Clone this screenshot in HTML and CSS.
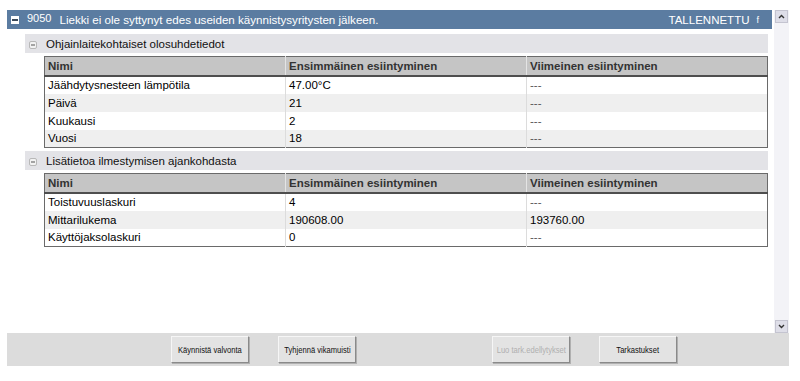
FILE: index.html
```html
<!DOCTYPE html>
<html lang="fi">
<head>
<meta charset="utf-8">
<title>9050</title>
<link rel="stylesheet" href="styles.css">
</head>
<body>
<div class="app">
  <div class="main">
    <div class="content">
      <div class="titlebar">
        <span class="tb-icon"><svg width="8" height="8" viewBox="0 0 8 8"><rect x="0" y="0" width="8" height="8" fill="#fff"/><rect x="1" y="3" width="6" height="2" fill="#3c4a5a"/></svg></span>
        <span class="code">9050</span>
        <span class="title">Liekki ei ole syttynyt edes useiden käynnistysyritysten jälkeen.</span>
        <span class="status">TALLENNETTU</span>
        <span class="flag">f</span>
      </div>

      <div class="section">
        <div class="sec-head">
          <svg class="sec-icon" width="8" height="8" viewBox="0 0 8 8"><rect x="0.5" y="0.5" width="7" height="7" rx="1.5" fill="#f2f2f2" stroke="#b8b8b8"/><rect x="2" y="3.5" width="4" height="1" fill="#555"/></svg>
          <span>Ohjainlaitekohtaiset olosuhdetiedot</span>
        </div>
        <table class="grid">
          <thead>
            <tr><th>Nimi</th><th>Ensimmäinen esiintyminen</th><th>Viimeinen esiintyminen</th></tr>
          </thead>
          <tbody>
            <tr><td>Jäähdytysnesteen lämpötila</td><td>47.00°C</td><td class="dash">---</td></tr>
            <tr><td>Päivä</td><td>21</td><td class="dash">---</td></tr>
            <tr><td>Kuukausi</td><td>2</td><td class="dash">---</td></tr>
            <tr><td>Vuosi</td><td>18</td><td class="dash">---</td></tr>
          </tbody>
        </table>
      </div>

      <div class="section">
        <div class="sec-head">
          <svg class="sec-icon" width="8" height="8" viewBox="0 0 8 8"><rect x="0.5" y="0.5" width="7" height="7" rx="1.5" fill="#f2f2f2" stroke="#b8b8b8"/><rect x="2" y="3.5" width="4" height="1" fill="#555"/></svg>
          <span>Lisätietoa ilmestymisen ajankohdasta</span>
        </div>
        <table class="grid">
          <thead>
            <tr><th>Nimi</th><th>Ensimmäinen esiintyminen</th><th>Viimeinen esiintyminen</th></tr>
          </thead>
          <tbody>
            <tr><td>Toistuvuuslaskuri</td><td>4</td><td class="dash">---</td></tr>
            <tr><td>Mittarilukema</td><td>190608.00</td><td>193760.00</td></tr>
            <tr><td>Käyttöjaksolaskuri</td><td>0</td><td class="dash">---</td></tr>
          </tbody>
        </table>
      </div>
    </div>

    <div class="scrollbar">
      <div class="sb-btn"><svg width="7" height="5" viewBox="0 0 7 5"><path d="M1 4 L3.5 1.5 L6 4" fill="none" stroke="#333" stroke-width="1.4"/></svg></div>
      <div class="sb-track"></div>
      <div class="sb-btn"><svg width="7" height="5" viewBox="0 0 7 5"><path d="M1 1 L3.5 3.5 L6 1" fill="none" stroke="#333" stroke-width="1.4"/></svg></div>
    </div>
  </div>

  <div class="buttonbar">
    <button class="btn" type="button"><span class="btn-label">Käynnistä valvonta</span></button>
    <button class="btn" type="button"><span class="btn-label">Tyhjennä vikamuisti</span></button>
    <button class="btn hidden" type="button"><span class="btn-label">&nbsp;</span></button>
    <button class="btn" type="button" disabled><span class="btn-label">Luo tark.edellytykset</span></button>
    <button class="btn" type="button"><span class="btn-label">Tarkastukset</span></button>
  </div>
</div>
</body>
</html>
```

FILE: styles.css
```css
* { box-sizing: border-box; }

body {
  margin: 0;
  background: #fff;
  font-family: "Liberation Sans", Arial, sans-serif;
  font-size: 11.5px;
  color: #000;
}

.app {
  width: 800px;
  padding: 10px 11px 0 7px;
}

.main {
  display: flex;
  height: 323px;
  gap: 2px;
}

.content {
  flex: 1;
  min-width: 0;
}

/* title bar */
.titlebar {
  display: flex;
  align-items: center;
  height: 19px;
  background: #5b7ca1;
  color: #fff;
  padding: 0 12px 0 4px;
}
.tb-icon { display: flex; width: 8px; height: 8px; margin-top: 1px; }
.code { font-size: 11px; margin-left: 8px; margin-bottom: 3px; }
.title { font-size: 11.6px; margin-left: 8px; flex: 1; }
.status { font-size: 11.5px; }
.flag { font-size: 9px; margin-left: 7px; margin-right: 1px; }

/* sections */
.section {
  margin: 5px 4px 0 18px;
}
.section + .section { margin-top: 3px; }
.sec-head {
  display: flex;
  align-items: center;
  height: 19px;
  background: #e3e3e7;
  padding-left: 4px;
  color: #111;
}
.sec-icon { margin-top: 3px; margin-right: 9px; flex: none; }

.grid {
  width: calc(100% - 19px);
  margin: 3px 0 0 19px;
  border-collapse: collapse;
  table-layout: fixed;
  border: 1px solid #6a6a6a;
}
.grid th {
  background: #c5c5c5;
  color: #333;
  font-weight: bold;
  text-align: left;
  height: 19px;
  padding: 0 3px;
  border-bottom: 2px solid #4e4e4e;
}
.grid th + th { border-left: 1px solid #e4e4e4; }
.grid td {
  height: 18px;
  padding: 0 3px;
  white-space: nowrap;
}
.grid td + td { border-left: 1px solid #dcdcdc; }
.grid tbody tr:nth-child(even) td { background: #efefef; }
.grid td.dash { color: #555; }

/* scrollbar */
.scrollbar {
  width: 15px;
  display: flex;
  flex-direction: column;
  align-items: center;
  background: #f3f3f7;
}
.sb-btn {
  width: 13px;
  height: 13px;
  display: flex;
  align-items: center;
  justify-content: center;
  background: #dedee8;
  border: 1px solid #c4c4d0;
}
.sb-track { flex: 1; }

/* bottom bar */
.buttonbar {
  display: flex;
  gap: 29px;
  height: 33px;
  background: #dcdcdc;
  padding: 3px 0 0 164px;
}
.btn {
  width: 78px;
  height: 27px;
  padding: 0;
  display: flex;
  align-items: center;
  justify-content: center;
  font-family: "Liberation Sans", Arial, sans-serif;
  font-size: 9.5px;
  color: #111;
  background: #e3e3e3;
  border: 1px solid;
  border-color: #f6f6f6 #8a8a8a #8a8a8a #f6f6f6;
  box-shadow: 1px 1px 0 #b0b0b0;
  overflow: hidden;
}
.btn-label {
  display: inline-block;
  white-space: nowrap;
  transform: scaleX(0.8);
}
.btn:disabled { color: #b0b0b0; }
.btn.hidden { visibility: hidden; }
```
